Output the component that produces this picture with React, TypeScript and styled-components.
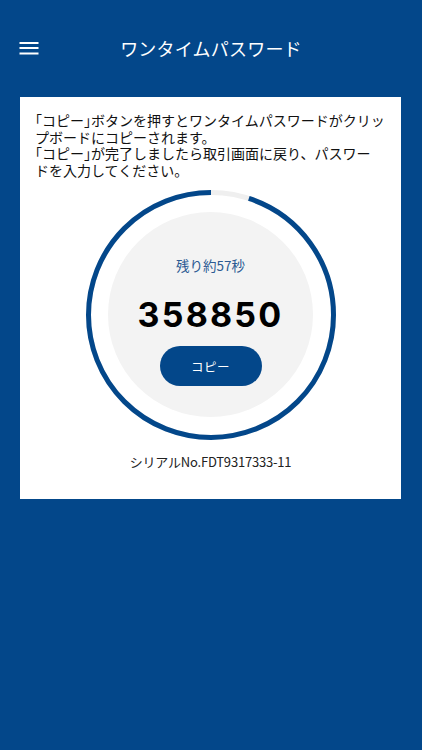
import React from "react";
import styled, { createGlobalStyle } from "styled-components";

const BLUE = "#03478a";
const JP = `"Noto Sans CJK JP", "Noto Sans", sans-serif`;

const GlobalStyle = createGlobalStyle`
  html, body {
    margin: 0;
    padding: 0;
    background: ${BLUE};
  }
  body {
    font-family: ${JP};
    -webkit-font-smoothing: antialiased;
  }
`;

const Page = styled.div`
  width: 422px;
  min-height: 750px;
  background: ${BLUE};
  padding-top: 20px;
  box-sizing: border-box;
  display: flex;
  flex-direction: column;
  align-items: stretch;
`;

const Header = styled.header`
  height: 56px;
  display: grid;
  grid-template-columns: 60px 1fr 60px;
  align-items: center;
`;

const MenuButton = styled.button`
  width: 40px;
  height: 40px;
  margin-left: 9px;
  padding: 0;
  border: none;
  background: transparent;
  display: flex;
  align-items: center;
  justify-content: center;
  cursor: pointer;
`;

const Title = styled.h1`
  margin: 0;
  text-align: center;
  color: #ffffff;
  font-family: ${JP};
  font-size: 18px;
  font-weight: 400;
  letter-spacing: 0.2px;
`;

const Card = styled.section`
  margin: 21px 21px 0 20px;
  background: #ffffff;
  padding: 15px 10px 28px 15px;
  display: flex;
  flex-direction: column;
  align-items: center;
`;

const Notice = styled.p`
  align-self: stretch;
  margin: 0;
  font-family: ${JP};
  font-size: 14px;
  line-height: 16.7px;
  color: #111111;
  white-space: nowrap;
`;

const Bracket = styled.span`
  font-feature-settings: "halt";
`;

const RingBox = styled.div`
  position: relative;
  width: 250px;
  height: 250px;
  margin-top: 11px;
  margin-right: 5px;
  display: flex;
  align-items: center;
  justify-content: center;
`;

const RingSvg = styled.svg`
  position: absolute;
  inset: 0;
`;

const Dial = styled.div`
  position: relative;
  width: 205px;
  height: 205px;
  border-radius: 50%;
  background: #f3f3f3;
  display: flex;
  flex-direction: column;
  align-items: center;
  padding-top: 43px;
  box-sizing: border-box;
`;

const Remaining = styled.div`
  font-family: ${JP};
  font-size: 13.5px;
  line-height: 20px;
  color: #2c5b93;
`;

const Code = styled.div`
  margin-top: 20px;
  font-family: Inter, "Liberation Sans", sans-serif;
  font-weight: 700;
  font-size: 34px;
  line-height: 40px;
  letter-spacing: 2.2px;
  color: #000000;
`;

const CopyButton = styled.button`
  margin-top: 11px;
  width: 102px;
  height: 40px;
  border: none;
  border-radius: 20px;
  background: ${BLUE};
  color: #ffffff;
  font-family: ${JP};
  font-size: 12.5px;
  letter-spacing: 0.5px;
  cursor: pointer;
`;

const Serial = styled.div`
  margin-top: 13px;
  margin-right: 5px;
  font-family: ${JP};
  font-size: 13px;
  line-height: 18px;
  color: #222222;
  letter-spacing: -0.2px;
`;

const MenuIcon = () => (
  <svg width="20" height="13" viewBox="0 0 20 13">
    <rect x="0.5" y="0" width="19" height="2" fill="#fff" />
    <rect x="0.5" y="5" width="19" height="2" fill="#fff" />
    <rect x="0.5" y="10.5" width="19" height="2" fill="#fff" />
  </svg>
);

const Ring: React.FC<{ remaining: number; total: number }> = ({ remaining, total }) => {
  const r = 122.5;
  const c = 2 * Math.PI * r;
  const frac = remaining / total;
  return (
    <RingSvg width="250" height="250" viewBox="0 0 250 250">
      <circle cx="125" cy="125" r={r} fill="none" stroke="#efefef" strokeWidth="5" />
      <circle
        cx="125"
        cy="125"
        r={r}
        fill="none"
        stroke={BLUE}
        strokeWidth="5"
        strokeDasharray={`${c * frac} ${c}`}
        strokeDashoffset={-c * (1 - frac)}
        transform="rotate(-90 125 125)"
      />
    </RingSvg>
  );
};

export default function App() {
  return (
    <>
      <GlobalStyle />
      <Page>
        <Header>
          <MenuButton aria-label="menu">
            <MenuIcon />
          </MenuButton>
          <Title>ワンタイムパスワード</Title>
          <span />
        </Header>
        <Card>
          <Notice>
            <Bracket>「</Bracket>コピー<Bracket>」</Bracket>ボタンを押すとワンタイムパスワードがクリッ
            <br />
            プボードにコピーされます。
            <br />
            <Bracket>「</Bracket>コピー<Bracket>」</Bracket>が完了しましたら取引画面に戻り、パスワー
            <br />
            ドを入力してください。
          </Notice>
          <RingBox>
            <Ring remaining={57} total={60} />
            <Dial>
              <Remaining>残り約57秒</Remaining>
              <Code>358850</Code>
              <CopyButton>コピー</CopyButton>
            </Dial>
          </RingBox>
          <Serial>シリアルNo.FDT9317333-11</Serial>
        </Card>
      </Page>
    </>
  );
}
